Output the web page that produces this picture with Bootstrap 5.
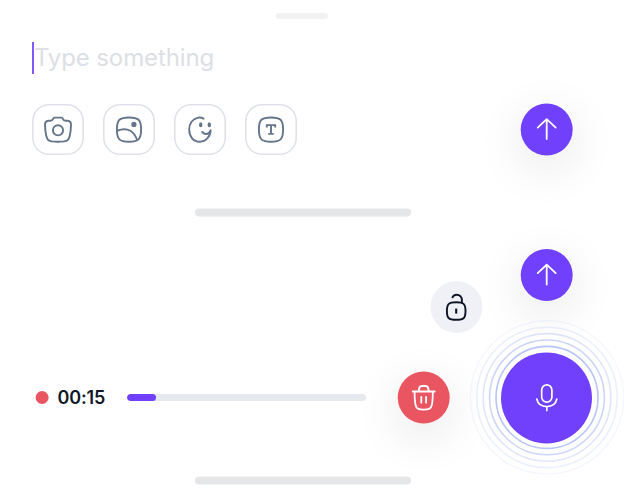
<!DOCTYPE html>
<html lang="en">
<head>
<meta charset="utf-8">
<meta name="viewport" content="width=device-width, initial-scale=1">
<title>Message composer</title>
<link href="https://cdn.jsdelivr.net/npm/bootstrap@5.3.0/dist/css/bootstrap.min.css" rel="stylesheet">
<style>
body{width:624px;height:498px;font-family:Inter,"Liberation Sans",sans-serif;background:#fff;overflow:hidden}
svg{display:block;fill:none;stroke:currentColor;stroke-linecap:round;stroke-linejoin:round;overflow:visible}
.composer{height:217px;padding-top:13px}
.grabber{width:52px;height:6px;margin-left:276px;background:#f2f2f3}
.prompt{margin:23px 0 0 32px;height:32px}
.caret{width:2px;height:32px;background:#8058fb}
.hint{font-size:24px;line-height:32px;letter-spacing:-.12px;color:#dcdfe4}
.tools{margin:30px 51.5px 0 32px;height:52px}
.tool{width:52px;height:51px;border:0;box-shadow:inset 0 0 0 1.6px #dfe2e8;border-radius:17px;background:#fff;color:#64748b}
.tool svg{transform:translateY(-.4px)}
.tool-set{gap:19px}
.round{width:52px;height:52px;border:0;transform:translate(-.3px,-.4px)}
.lifted{box-shadow:0 12px 48px rgba(0,0,0,.11)}
.violet{background:#7140fd;color:#fff}
.red{background:#ea5562;color:#fff}
.pale{background:#f0f1f6;color:#0c1425;transform:translate(-.5px,.1px)}
.home{width:216px;height:8px;margin-left:195px;background:#e5e6e8;transform:translateY(-.5px)}
.recorder{height:260px;padding-left:35.5px}
.timeline{width:330.5px;height:13px;margin-top:174px}
.dot{width:13px;height:13px;background:#ea5562;transform:translateX(-.4px)}
.clock{width:69.5px;margin-left:9px;font-size:18px;font-weight:600;line-height:20px;letter-spacing:-.15px;color:#101828}
.track{height:7px;background:#e6e9ee}
.track .progress-bar{background:#7140fd}
.middle{width:84.5px;margin-left:32px;padding-top:64px;gap:38.5px}
.right{width:91px;margin-left:18.5px;padding-top:32px;gap:51.5px}
.right .round{transform:translate(-.3px,.1px)}
.mic{width:91px;height:91px;border:0}
.mic-wrap{transform:translateY(-.6px)}
.rings{left:-32.5px;top:-32.5px;pointer-events:none;color:#4664ed}
</style>
<script src="https://cdn.jsdelivr.net/npm/bootstrap@5.3.0/dist/js/bootstrap.bundle.min.js"></script>
</head>
<body>
<section class="composer d-flex flex-column">
  <div class="grabber rounded-pill"></div>
  <div class="prompt d-flex align-items-center"><span class="caret"></span><span class="hint">Type something</span></div>
  <div class="tools d-flex justify-content-between">
    <div class="tool-set d-flex">
      <button class="tool p-0 d-flex align-items-center justify-content-center" aria-label="Camera">
        <svg width="30" height="30" stroke-width="1.9"><path d="M7.5 6.1C9.3 6.1 9.6 5.7 10 4.4C10.4 3.2 10.7 3 11.8 3H18.2C19.3 3 19.6 3.2 20 4.4C20.4 5.7 20.7 6.1 22.5 6.1H24.5C27.3 6.3 28.1 7.4 28 10.2C27.9 14 27.5 18.3 26.7 21.4C25.7 25.4 24.5 26.3 21 26.8C17 27.2 13 27.2 9 26.8C5.5 26.3 4.3 25.4 3.3 21.4C2.5 18.3 2.1 14 2 10.2C1.9 7.4 2.7 6.3 5.5 6.1Z"/><circle cx="15" cy="15.7" r="5.1"/></svg>
      </button>
      <button class="tool p-0 d-flex align-items-center justify-content-center" aria-label="Image">
        <svg width="30" height="30" stroke-width="1.9"><path d="M15 2.9C24.4 2.9 27.1 5 27.1 15S24.4 27.1 15 27.1S2.9 25 2.9 15S5.6 2.9 15 2.9ZM3 16.2C14 12 20.5 17 23.2 25.8"/><circle cx="19.9" cy="9.8" r="2.6" fill="currentColor" stroke="none"/></svg>
      </button>
      <button class="tool p-0 d-flex align-items-center justify-content-center" aria-label="Sticker">
        <svg width="30" height="30" stroke-width="1.9"><path d="M18.6 4C16.6 2.8 14.6 2.6 12.4 3.2C7.3 4.5 4.2 9.2 4.2 15C4.2 22 8.4 27.1 14.8 27.1C21 27.1 25.6 21.5 25.6 15.7C24 20.4 19.3 20.3 17.2 17.3"/><g fill="currentColor" stroke="none"><ellipse cx="15.7" cy="10.1" rx="1.7" ry="2.5"/><ellipse cx="24.3" cy="10.2" rx="1.7" ry="2.5"/></g></svg>
      </button>
      <button class="tool p-0 d-flex align-items-center justify-content-center" aria-label="Text">
        <svg width="30" height="30" stroke-width="1.9"><path d="M15 2.9C24.4 2.9 27.1 5 27.1 15S24.4 27.1 15 27.1S2.9 25 2.9 15S5.6 2.9 15 2.9Z"/><path stroke-linecap="butt" stroke-linejoin="miter" d="M10.8 13V10.5H19.2V13M15 10.5V19.3M12.3 19.3H17.7"/></svg>
      </button>
    </div>
    <button class="round violet lifted rounded-circle p-0 d-flex align-items-center justify-content-center" aria-label="Send">
      <svg width="20" height="22" stroke-width="1.8" stroke-linecap="butt"><path d="M10 20.5V.5M1 9L10 .5L19 9"/></svg>
    </button>
  </div>
  <div class="home rounded-pill mt-auto"></div>
</section>

<section class="recorder d-flex align-items-start">
  <div class="timeline d-flex align-items-center">
    <span class="dot rounded-circle flex-shrink-0"></span>
    <span class="clock flex-shrink-0">00:15</span>
    <div class="track progress rounded-pill flex-grow-1"><div class="progress-bar rounded-pill" style="width:12.3%"></div></div>
  </div>
  <div class="middle d-flex flex-column">
    <button class="round pale rounded-circle p-0 align-self-end d-flex align-items-center justify-content-center" aria-label="Lock">
      <svg width="30" height="30" stroke-width="1.9"><path d="M14.7 10.2C22.5 10.2 24 12 24 18.9S22.5 27.7 14.7 27.7S5.4 25.8 5.4 18.9S6.9 10.2 14.7 10.2Z"/><path d="M11 5.2C12 3.3 13.4 2.6 15 2.6C18.2 2.6 20.4 4.8 20.4 8.2V10.4"/><path stroke-linecap="butt" stroke-width="2.1" d="M14.7 16.5V21.5"/></svg>
    </button>
    <button class="round red lifted rounded-circle p-0 d-flex align-items-center justify-content-center" aria-label="Delete">
      <svg width="30" height="30" stroke-width="1.8"><path d="M4 8.9H26M5.9 8.9C5.9 14 6.1 18.8 6.8 22.1C7.7 26 9.6 27 15 27S22.3 26 23.2 22.1C23.9 18.8 24.1 14 24.1 8.9M10.1 8.9C10.1 4.9 11 3.4 13.1 3.4H16.9C19 3.4 19.9 4.9 19.9 8.9M12.6 14.4V20.1M17.4 14.4V20.1"/></svg>
    </button>
  </div>
  <div class="right d-flex flex-column align-items-center">
    <button class="round violet lifted rounded-circle p-0 d-flex align-items-center justify-content-center" aria-label="Send">
      <svg width="20" height="22" stroke-width="1.8" stroke-linecap="butt"><path d="M10 20.5V.5M1 9L10 .5L19 9"/></svg>
    </button>
    <div class="mic-wrap position-relative">
      <svg class="rings position-absolute" width="156" height="156" stroke-width="1.6"><circle cx="78" cy="78" r="51" opacity=".38"/><circle cx="78" cy="78" r="57.4" opacity=".27"/><circle cx="78" cy="78" r="63.8" opacity=".17"/><circle cx="78" cy="78" r="70.2" opacity=".1"/><circle cx="78" cy="78" r="76.6" opacity=".05"/></svg>
      <button class="mic violet rounded-circle p-0 d-flex align-items-center justify-content-center position-relative" aria-label="Record">
        <svg width="30" height="30" stroke-width="1.7"><rect x="9.7" y="2.5" width="10.2" height="17.3" rx="5.1"/><path d="M4.8 16.8C5.8 21.6 9.4 24.2 14.8 24.2S23.8 21.6 24.8 16.8M14.8 24.2V28"/></svg>
      </button>
    </div>
  </div>
</section>
<div class="home rounded-pill"></div>
</body>
</html>
